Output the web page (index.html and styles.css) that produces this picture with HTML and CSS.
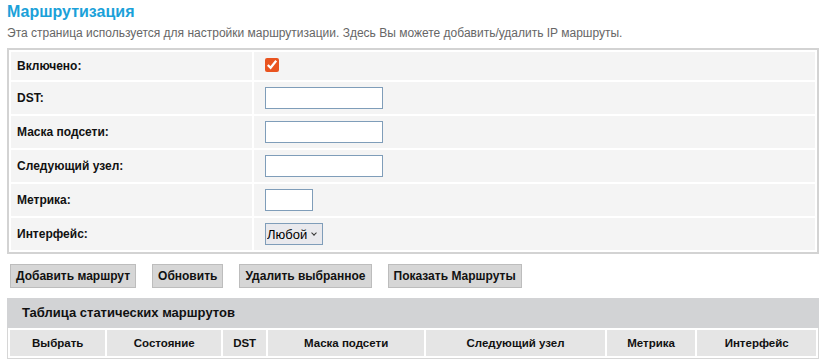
FILE: index.html
```html
<!DOCTYPE html>
<html lang="ru">
<head>
    <meta charset="UTF-8">
    <meta name="viewport" content="width=device-width, initial-scale=1.0">
    <title>Маршрутизация</title>
    <link rel="stylesheet" href="styles.css">
</head>
<body>
    <h1 class="page-title">Маршрутизация</h1>
    <p class="page-desc">Эта страница используется для настройки маршрутизации. Здесь Вы можете добавить/удалить IP маршруты.</p>

    <table class="form-table">
        <tr class="row-first">
            <td class="form-label">Включено:</td>
            <td class="form-value"><input type="checkbox" class="check" checked></td>
        </tr>
        <tr>
            <td class="form-label">DST:</td>
            <td class="form-value"><input type="text" class="text-input"></td>
        </tr>
        <tr>
            <td class="form-label">Маска подсети:</td>
            <td class="form-value"><input type="text" class="text-input"></td>
        </tr>
        <tr>
            <td class="form-label">Следующий узел:</td>
            <td class="form-value"><input type="text" class="text-input"></td>
        </tr>
        <tr>
            <td class="form-label">Метрика:</td>
            <td class="form-value"><input type="text" class="text-input small"></td>
        </tr>
        <tr>
            <td class="form-label">Интерфейс:</td>
            <td class="form-value">
                <span class="select-wrap">
                    <select class="select">
                        <option>Любой</option>
                    </select>
                </span>
            </td>
        </tr>
    </table>

    <div class="buttons">
        <button class="btn">Добавить маршрут</button>
        <button class="btn">Обновить</button>
        <button class="btn">Удалить выбранное</button>
        <button class="btn">Показать Маршруты</button>
    </div>

    <div class="routes">
        <div class="routes-title">Таблица статических маршрутов</div>
        <table class="routes-table">
            <tr>
                <th class="col-select">Выбрать</th>
                <th class="col-state">Состояние</th>
                <th class="col-dst">DST</th>
                <th class="col-mask">Маска подсети</th>
                <th class="col-gw">Следующий узел</th>
                <th class="col-metric">Метрика</th>
                <th class="col-iface">Интерфейс</th>
            </tr>
        </table>
    </div>
</body>
</html>
```

FILE: styles.css
```css
body {
    font-family: "Liberation Sans", Arial, sans-serif;
    margin: 0;
    padding: 0 6px 0 7px;
    color: #111;
}
.page-title {
    color: #1ba1d9;
    font-size: 16px;
    font-weight: bold;
    margin: 2px 0 0;
    line-height: 20px;
}
.page-desc {
    color: #666;
    font-size: 12px;
    margin: 4px 0 0;
    line-height: 14px;
}
.form-table {
    width: 812px;
    margin-top: 8px;
    border: 2px solid #d3d3d3;
    border-spacing: 2px;
    font-size: 12px;
}
.form-table td {
    background-color: #f4f4f4;
    height: 32px;
    padding: 0;
    vertical-align: middle;
}
.form-table .row-first td {
    height: 28px;
}
.form-label {
    width: 235px;
    padding-left: 6px !important;
    font-weight: bold;
}
.form-value {
    padding-left: 11px !important;
}
.check {
    margin: 0;
    width: 14px;
    height: 14px;
    accent-color: #e95420;
    display: block;
    position: relative;
    top: -1px;
}
.text-input {
    display: block;
    box-sizing: border-box;
    width: 118px;
    height: 22px;
    border: 1px solid #7f9db9;
    background: #fff;
    margin: 0;
}
.text-input.small {
    width: 48px;
}
.select-wrap {
    position: relative;
    display: inline-block;
    vertical-align: middle;
}
.select-wrap::after {
    content: "";
    position: absolute;
    left: 47px;
    top: 8px;
    width: 3px;
    height: 3px;
    border-right: 1px solid #333;
    border-bottom: 1px solid #333;
    transform: rotate(45deg);
    pointer-events: none;
}
.select {
    display: block;
    box-sizing: border-box;
    width: 58px;
    height: 22px;
    border: 1px solid #7f9db9;
    border-radius: 0;
    background-color: #e9e9ed;
    font-family: "Liberation Sans", Arial, sans-serif;
    font-size: 13px;
    color: #000;
    padding: 0 0 0 1px;
    margin: 0;
    appearance: none;
    -webkit-appearance: none;
}
.buttons {
    display: flex;
    gap: 16px;
    margin: 10px 0 0 3px;
}
.btn {
    height: 24px;
    padding: 0 5px;
    background-color: #d6d6d6;
    border: 1px solid #bdbdbd;
    border-radius: 0;
    font-family: "Liberation Sans", Arial, sans-serif;
    font-size: 12px;
    font-weight: bold;
    color: #111;
}
.routes {
    width: 812px;
    margin-top: 10px;
}
.routes-title {
    background-color: #d2d3d5;
    height: 30px;
    line-height: 30px;
    padding-left: 15px;
    font-size: 13px;
    font-weight: bold;
}
.routes-table {
    width: 100%;
    border: 1px solid #d6d6d6;
    border-top: none;
    border-spacing: 2px;
    font-size: 11.5px;
}
.routes-table th {
    background-color: #e5e5e5;
    height: 26px;
    padding: 0;
    font-weight: bold;
}
.col-select { width: 95px; }
.col-state { width: 113px; }
.col-dst { width: 43px; }
.col-mask { width: 155px; }
.col-gw { width: 178px; }
.col-metric { width: 88px; }
.col-iface { width: 118px; }
```
